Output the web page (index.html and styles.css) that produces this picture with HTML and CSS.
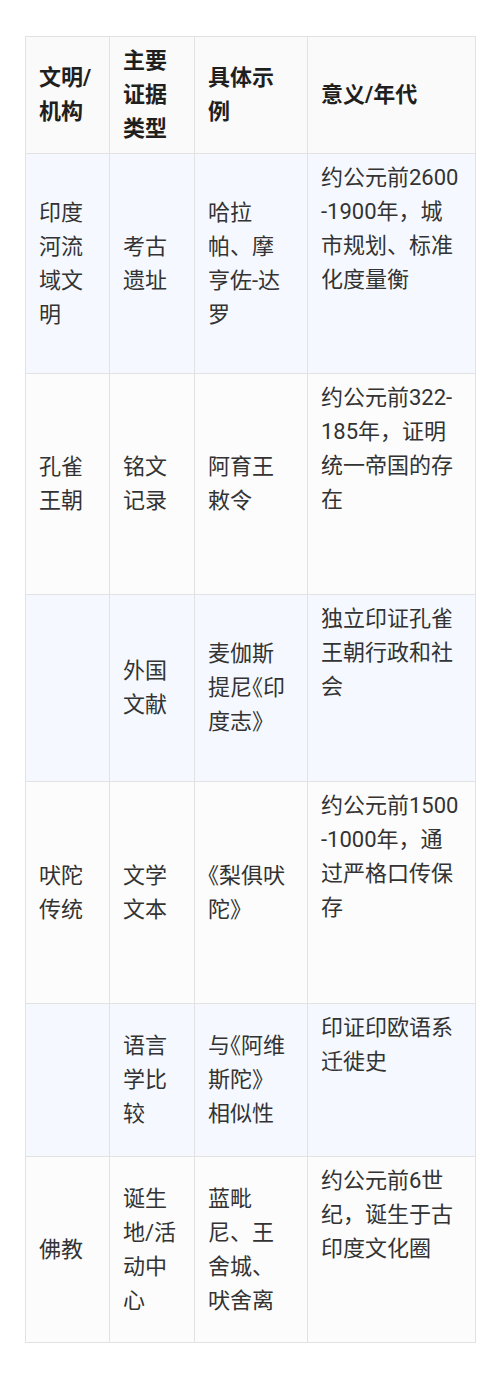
FILE: index.html
```html
<!DOCTYPE html>
<html lang="zh-CN">
<head>
<meta charset="utf-8">
<title>古印度文明证据</title>
<link rel="stylesheet" href="styles.css">
</head>
<body>
<div class="page">
  <table class="evidence">
    <colgroup>
      <col class="c1"><col class="c2"><col class="c3"><col class="c4">
    </colgroup>
    <thead>
      <tr class="head">
        <th>文明/机构</th>
        <th>主要证据类型</th>
        <th>具体示例</th>
        <th>意义/年代</th>
      </tr>
    </thead>
    <tbody>
      <tr class="r1 odd">
        <td>印度河流域文明</td>
        <td>考古遗址</td>
        <td>哈拉帕、摩亨佐-达罗</td>
        <td class="note">约公元前2600-1900年，城市规划、标准化度量衡</td>
      </tr>
      <tr class="r2 even">
        <td>孔雀王朝</td>
        <td>铭文记录</td>
        <td>阿育王敕令</td>
        <td class="note">约公元前322-185年，证明统一帝国的存在</td>
      </tr>
      <tr class="r3 odd">
        <td></td>
        <td>外国文献</td>
        <td>麦伽斯提尼<span class="bk">《</span>印度志》</td>
        <td class="note">独立印证孔雀王朝行政和社会</td>
      </tr>
      <tr class="r4 even">
        <td>吠陀传统</td>
        <td>文学文本</td>
        <td><span class="bk">《</span>梨俱吠陀》</td>
        <td class="note">约公元前1500-1000年，通过严格口传保存</td>
      </tr>
      <tr class="r5 odd">
        <td></td>
        <td>语言学比较</td>
        <td>与<span class="bk">《</span>阿维斯陀》相似性</td>
        <td class="note">印证印欧语系迁徙史</td>
      </tr>
      <tr class="r6 even">
        <td>佛教</td>
        <td>诞生地/活动中心</td>
        <td>蓝毗尼、王舍城、吠舍离</td>
        <td class="note">约公元前6世纪，诞生于古印度文化圈</td>
      </tr>
    </tbody>
  </table>
</div>
</body>
</html>
```
FILE: styles.css
```css
html, body {
  margin: 0;
  padding: 0;
  background: #ffffff;
}

.page {
  padding: 36px 25px 40px;
  font-family: Roboto, "Noto Sans CJK SC", sans-serif;
  font-size: 22px;
  line-height: 34px;
  color: #333333;
}

.evidence {
  width: 450px;
  table-layout: fixed;
  border-collapse: collapse;
  border: 1px solid #e2e2e2;
}

.c1 { width: 84px; }
.c2 { width: 85px; }
.c3 { width: 113px; }
.c4 { width: 168px; }

.evidence th,
.evidence td {
  border: 1px solid #e2e2e2;
  padding: 7px 13px;
  text-align: left;
  vertical-align: middle;
  word-break: break-all;
}

.evidence th {
  font-weight: 700;
  color: #1f1f1f;
  background: #fafafa;
}

.evidence td.note {
  vertical-align: top;
}

.bk {
  font-feature-settings: "halt";
}

.odd { background: #f5f9ff; }
.even { background: #fcfcfc; }

.head { height: 117px; }
.r1 { height: 220px; }
.r2 { height: 221px; }
.r3 { height: 187px; }
.r4 { height: 222px; }
.r5 { height: 153px; }
.r6 { height: 186px; }
```
